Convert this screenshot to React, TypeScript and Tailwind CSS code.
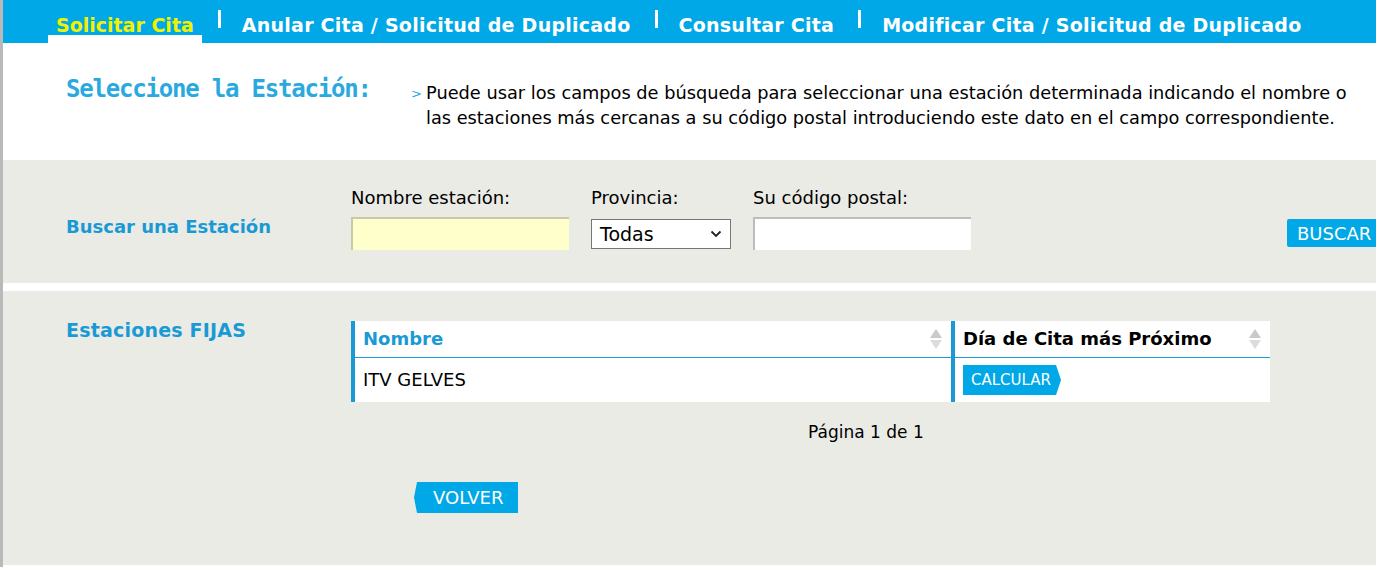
import React from 'react';

type Tab = { label: string; active?: boolean };

const tabs: Tab[] = [
  { label: 'Solicitar Cita', active: true },
  { label: 'Anular Cita / Solicitud de Duplicado' },
  { label: 'Consultar Cita' },
  { label: 'Modificar Cita / Solicitud de Duplicado' },
];

const SortIcon: React.FC = () => (
  <svg width="14" height="22" viewBox="0 0 14 22" className="shrink-0">
    <polygon points="7,1 13,10 1,10" fill="#c9c9c9" />
    <polygon points="1,12 13,12 7,21" fill="#dcdcdc" />
  </svg>
);

const App: React.FC = () => {
  return (
    <div className="min-h-screen bg-white border-l-[3px] border-[#b9b9b9] font-['DejaVu_Sans',Verdana,sans-serif] text-black">
      {/* Top tabs */}
      <nav className="h-[43px] bg-[#00a8e7] flex items-stretch pl-[45px] overflow-hidden">
        {tabs.map((tab, i) => (
          <React.Fragment key={tab.label}>
            {i > 0 && (
              <div className="shrink-0 pt-[10px] pl-[16px] pr-[13px]">
                <span className="block w-[3px] h-[18px] bg-white" />
              </div>
            )}
            <a
              href="#"
              className={`shrink-0 h-[43px] flex flex-col px-[8px] pt-[15px] text-[19px] leading-[20px] font-bold whitespace-nowrap ${
                tab.active ? 'text-[#f2f200]' : 'text-white tracking-[0.25px]'
              }`}
            >
              {tab.label}
              {tab.active && <span className="mt-auto -mx-[8px] h-[8px] bg-white" />}
            </a>
          </React.Fragment>
        ))}
      </nav>

      {/* Intro */}
      <header className="h-[117px] flex">
        <h1 className="shrink-0 w-[408px] pl-[63px] pt-[31px] font-['DejaVu_Sans_Mono',monospace] font-bold text-[24px] leading-[30px] tracking-[-1.2px] whitespace-nowrap text-[#2aa9df]">
          Seleccione la Estación:
        </h1>
        <div className="flex pt-[38px]">
          <span className="w-[15px] pt-[3px] text-[13px] text-[#2aa9df]">&gt;</span>
          <p className="text-[17.75px] leading-[25px] whitespace-nowrap">
            Puede usar los campos de búsqueda para seleccionar una estación determinada indicando el nombre o
            <br />
            las estaciones más cercanas a su código postal introduciendo este dato en el campo correspondiente.
          </p>
        </div>
      </header>

      {/* Search */}
      <section className="h-[123px] bg-[#ebebe6] flex items-start pl-[63px] overflow-hidden">
        <h2 className="shrink-0 w-[285px] pt-[53px] text-[18px] font-bold text-[#1a9ad5]">Buscar una Estación</h2>
        <div className="shrink-0 flex gap-[22px] pt-[27px]">
          <label className="flex flex-col gap-[8px] text-[18px] leading-[22px]">
            Nombre estación:
            <input className="w-[218px] h-[33px] bg-[#ffffcc] border-t-2 border-l-2 border-[#c9c9a8] outline-none" />
          </label>
          <label className="flex flex-col gap-[8px] text-[18px] leading-[22px]">
            Provincia:
            <div className="mt-[2px] w-[140px] h-[30px] bg-white border border-[#767676] flex items-center justify-between px-[8px] text-[19px]">
              <span>Todas</span>
              <svg width="12" height="8" viewBox="0 0 12 8">
                <path d="M1.5 1.5 6 6l4.5-4.5" fill="none" stroke="#222" strokeWidth="1.8" />
              </svg>
            </div>
          </label>
          <label className="flex flex-col gap-[8px] text-[18px] leading-[22px]">
            Su código postal:
            <input className="w-[218px] h-[33px] bg-white border-t-2 border-l-2 border-[#bdbdbd] outline-none" />
          </label>
        </div>
        <button className="shrink-0 ml-[316px] mt-[59px] w-[100px] h-[28px] bg-[#00a8e7] text-white text-[18px] text-left pl-[10px] rounded-l-[2px]">
          BUSCAR
        </button>
      </section>

      <div className="h-[8px] bg-white" />

      {/* Results */}
      <section className="h-[274px] bg-[#ebebe6] flex items-start pl-[63px]">
        <h2 className="shrink-0 w-[285px] pt-[25px] text-[19px] tracking-[0.2px] font-bold text-[#1a9ad5]">Estaciones FIJAS</h2>
        <div className="shrink-0 pt-[30px]">
          <table className="w-[919px] bg-white border-collapse">
            <thead>
              <tr className="h-[36px] border-b border-[#1a9ad5]">
                <th className="w-[600px] border-l-4 border-[#1a9ad5] px-[8px] text-left">
                  <div className="flex items-center justify-between text-[18px] font-bold text-[#1a9ad5]">
                    Nombre
                    <SortIcon />
                  </div>
                </th>
                <th className="border-l-4 border-[#1a9ad5] px-[8px] text-left">
                  <div className="flex items-center justify-between text-[18px] font-bold">
                    Día de Cita más Próximo
                    <SortIcon />
                  </div>
                </th>
              </tr>
            </thead>
            <tbody>
              <tr className="h-[45px]">
                <td className="border-l-4 border-[#1a9ad5] px-[8px] text-[18px]">ITV GELVES</td>
                <td className="border-l-4 border-[#1a9ad5] px-[8px]">
                  <button className="flex items-stretch h-[30px]">
                    <span className="bg-[#00a8e7] text-white text-[15px] pl-[8px] pr-[2px] flex items-center">CALCULAR</span>
                    <svg width="8" height="30" viewBox="0 0 8 30">
                      <polygon points="0,0 3,0 8,15 3,30 0,30" fill="#00a8e7" />
                    </svg>
                  </button>
                </td>
              </tr>
            </tbody>
          </table>
          <p className="pl-[457px] pt-[18px] text-[17px]">Página 1 de 1</p>
          <button className="ml-[63px] mt-[36px] flex items-stretch h-[31px]">
            <svg width="6" height="31" viewBox="0 0 6 31">
              <polygon points="6,0 3,0 0,15.5 3,31 6,31" fill="#00a8e7" />
            </svg>
            <span className="bg-[#00a8e7] text-white text-[18px] pl-[13px] pr-[15px] flex items-center">VOLVER</span>
          </button>
        </div>
      </section>
    </div>
  );
};

export default App;
